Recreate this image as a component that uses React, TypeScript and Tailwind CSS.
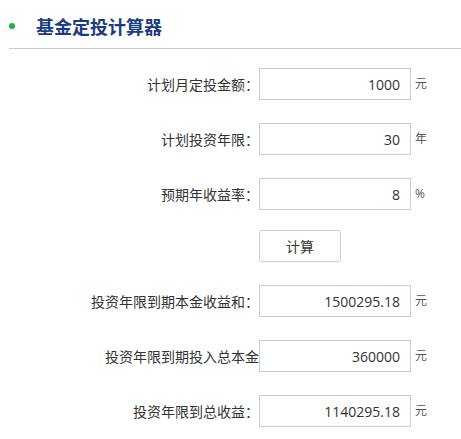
import React, { useState } from 'react';

const font = "font-['Open_Sans','Noto_Sans_CJK_SC',sans-serif]";

interface RowProps {
  label: string;
  value: string;
  unit: string;
  onChange?: (v: string) => void;
}

const Row: React.FC<RowProps> = ({ label, value, unit, onChange }) => (
  <div className="flex items-center h-[32px]">
    <label className="w-[259px] shrink-0 text-right whitespace-nowrap text-[14px] text-[#333]">{label}</label>
    <input
      type="text"
      value={value}
      readOnly={!onChange}
      onChange={(e) => onChange && onChange(e.target.value)}
      className={`w-[152px] h-[32px] shrink-0 border border-[#ccc] bg-white text-right pr-[10px] text-[14px] text-[#333] outline-none ${font}`}
    />
    <span className="ml-[4px] text-[12px] text-[#555]">{unit}</span>
  </div>
);

export default function App() {
  const [monthly, setMonthly] = useState('1000');
  const [years, setYears] = useState('30');
  const [rate, setRate] = useState('8');
  const [total, setTotal] = useState('1500295.18');
  const [principal, setPrincipal] = useState('360000');
  const [profit, setProfit] = useState('1140295.18');

  const calc = () => {
    const m = parseFloat(monthly) || 0;
    const n = (parseFloat(years) || 0) * 12;
    const r = (parseFloat(rate) || 0) / 100 / 12;
    const fv = r === 0 ? m * n : (m * (Math.pow(1 + r, n) - 1) / r) * (1 + r);
    const p = m * n;
    setTotal(fv.toFixed(2));
    setPrincipal(String(p));
    setProfit((fv - p).toFixed(2));
  };

  return (
    <div className={`w-[461px] min-h-[439px] bg-white ${font}`}>
      {/* header */}
      <div className="ml-[9px] h-[49px] pt-[4px] flex items-center border-b border-[#ccc]">
        <span className="w-[6px] h-[6px] rounded-full bg-[#1fb24a]" />
        <h2 className="ml-[21px] text-[18px] font-bold text-[#1a3c82] font-['Noto_Sans_CJK_SC',sans-serif]">基金定投计算器</h2>
      </div>

      <div className="mt-[19px] flex flex-col gap-[23px]">
        <Row label="计划月定投金额：" value={monthly} unit="元" onChange={setMonthly} />
        <Row label="计划投资年限：" value={years} unit="年" onChange={setYears} />
        <Row label="预期年收益率：" value={rate} unit="%" onChange={setRate} />
        <div className="-mt-[3px] pl-[259px]">
          <button
            onClick={calc}
            className="w-[82px] h-[32px] border border-[#ccc] rounded-[3px] bg-white text-[14px] text-[#333]"
          >
            计算
          </button>
        </div>
        <Row label="投资年限到期本金收益和：" value={total} unit="元" />
        <Row label="投资年限到期投入总本金" value={principal} unit="元" />
        <Row label="投资年限到总收益：" value={profit} unit="元" />
      </div>
    </div>
  );
}
